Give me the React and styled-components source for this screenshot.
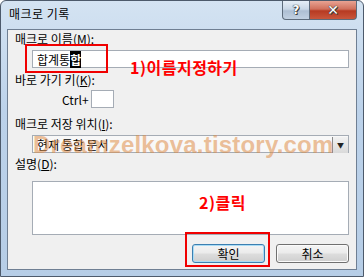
import React from 'react';
import styled, { createGlobalStyle } from 'styled-components';

const GlobalStyle = createGlobalStyle`
  html, body {
    margin: 0;
    padding: 0;
    background: #ffffff;
  }
  body {
    font-family: "Noto Sans CJK KR", "DejaVu Sans", sans-serif;
    font-size: 12px;
  }
`;

const Window = styled.div`
  position: relative;
  width: 364px;
  height: 277px;
  box-sizing: border-box;
  border: 1px solid #4d5a6b;
  border-radius: 6px 6px 0 0;
  background: linear-gradient(180deg, #d4e3f2 0%, #bcd2ea 40%, #b6cde6 100%);
  display: flex;
  flex-direction: column;
  overflow: hidden;
`;

const TitleBar = styled.div`
  height: 28px;
  display: flex;
  align-items: flex-start;
  justify-content: space-between;
  padding-left: 8px;
`;

const Title = styled.span`
  margin-top: 5px;
  font-size: 12px;
  line-height: 16px;
  color: #000;
  letter-spacing: 0.5px;
`;

const Caption = styled.div`
  display: flex;
  margin-right: 6px;
`;

const CapButton = styled.div`
  width: ${p => p.$w}px;
  height: 19px;
  box-sizing: border-box;
  border: 1px solid #5d6b7b;
  border-top: none;
  border-radius: ${p => (p.$close ? '0 0 4px 0' : '0 0 0 4px')};
  background: ${p =>
    p.$close
      ? 'linear-gradient(180deg, #e8a393 0%, #d0705c 45%, #b73a22 55%, #c9563c 100%)'
      : 'linear-gradient(180deg, #e6eef7 0%, #c9d7e6 45%, #aebfd3 55%, #c2d1e2 100%)'};
  display: flex;
  align-items: center;
  justify-content: center;
  font-family: "DejaVu Sans", sans-serif;
  font-weight: bold;
  font-size: ${p => (p.$close ? 14 : 12)}px;
  color: #fff;
  text-shadow: 0 0 1px #2b2b2b, 0 0 1px #2b2b2b, 1px 1px 0 #444;
  margin-left: ${p => (p.$close ? -1 : 0)}px;
`;

const Client = styled.div`
  position: relative;
  flex: 1;
  margin: 0 6px 6px 6px;
  border: 1px solid #6f7f93;
  background: #f0f0f0;
  padding: 2px 0 0 7px;
  display: flex;
  flex-direction: column;
  color: #000;
`;

const Label = styled.div`
  font-size: 12px;
  line-height: 14px;
  height: 14px;
  margin-top: ${p => p.$top || 0}px;

  u {
    text-decoration: underline;
  }
`;

const Field = styled.div`
  position: relative;
  margin-left: 17px;
  width: ${p => p.$w || 317}px;
  height: ${p => p.$h || 18}px;
  margin-top: ${p => p.$top || 0}px;
  box-sizing: border-box;
  border: 1px solid #a5acb5;
  background: #fff;
  display: flex;
  align-items: center;
  padding-left: 4px;
  font-size: 12px;
`;

const Composing = styled.span`
  background: #000;
  color: #fff;
  font-weight: bold;
`;

const ShortcutRow = styled.div`
  display: flex;
  align-items: center;
  margin-top: 3px;
  padding-left: 47px;
  gap: 2px;
`;

const KeyBox = styled.div`
  width: 23px;
  height: 18px;
  box-sizing: border-box;
  border: 1px solid #a5acb5;
  background: #fff;
`;

const Select = styled(Field)`
  background: #f8f8f8;
  color: #000;
`;

const DropButton = styled.div`
  position: absolute;
  right: 0;
  top: 1px;
  width: 16px;
  height: 16px;
  box-sizing: border-box;
  border-left: 1px solid #8a8a8a;
  background: linear-gradient(180deg, #f2f2f2, #dadada);
  display: flex;
  align-items: flex-end;
  justify-content: center;
  padding-bottom: 4px;
  font-size: 7px;
  color: #222;
  line-height: 7px;
`;

const Watermark = styled.div`
  position: absolute;
  left: 25px;
  top: 100px;
  font-family: "Liberation Sans", "DejaVu Sans", sans-serif;
  font-weight: bold;
  font-size: 24px;
  line-height: 30px;
  letter-spacing: 0.2px;
  color: rgba(222, 140, 70, 0.55);
  white-space: nowrap;
  pointer-events: none;
`;

const ButtonRow = styled.div`
  display: flex;
  justify-content: flex-end;
  gap: 11px;
  margin-top: 9px;
  padding-right: 7px;
`;

const Button = styled.div`
  position: relative;
  width: 73px;
  height: 19px;
  box-sizing: border-box;
  border: 1px solid ${p => (p.$focus ? '#3c7fb1' : '#707070')};
  border-radius: 3px;
  background: linear-gradient(180deg, #f4f4f4 0%, #ebebeb 48%, #dddddd 52%, #cfcfcf 100%);
  box-shadow: ${p => (p.$focus ? 'inset 0 0 0 1px #a9dcf5' : 'inset 0 0 0 1px #fbfbfb')};
  display: flex;
  align-items: center;
  justify-content: center;
  font-size: 12px;
`;

const RedFrame = styled.div`
  position: absolute;
  left: ${p => p.$x}px;
  top: ${p => p.$y}px;
  width: ${p => p.$w}px;
  height: ${p => p.$h}px;
  box-sizing: border-box;
  border: 2px solid #f00000;
  pointer-events: none;
`;

const Note = styled.div`
  position: absolute;
  left: ${p => p.$x}px;
  top: ${p => p.$y}px;
  font-family: "Noto Sans CJK KR", sans-serif;
  font-weight: bold;
  font-size: 16px;
  line-height: 20px;
  color: #ff0000;
  letter-spacing: 0.5px;
  white-space: nowrap;
`;

export default function App() {
  return (
    <>
      <GlobalStyle />
      <Window>
        <TitleBar>
          <Title>매크로 기록</Title>
          <Caption>
            <CapButton $w={28}>?</CapButton>
            <CapButton $w={48} $close>✕</CapButton>
          </Caption>
        </TitleBar>
        <Client>
          <Label>매크로 이름(<u>M</u>):</Label>
          <Field $top={4}>
            합계통<Composing>합</Composing>
          </Field>
          <Label $top={5}>바로 가기 키(<u>K</u>):</Label>
          <ShortcutRow>
            <span>Ctrl+</span>
            <KeyBox />
          </ShortcutRow>
          <Label $top={9}>매크로 저장 위치(<u>I</u>):</Label>
          <Select $top={4}>
            현재 통합 문서
            <DropButton>▼</DropButton>
          </Select>
          <Label $top={4}>설명(<u>D</u>):</Label>
          <Field $top={10} $h={54} />
          <ButtonRow>
            <Button $focus>확인</Button>
            <Button>취소</Button>
          </ButtonRow>
          <Watermark>Dreamzelkova.tistory.com</Watermark>
          <RedFrame $x={17} $y={14} $w={83} $h={29} />
          <Note $x={122} $y={27}>1)이름지정하기</Note>
          <Note $x={191} $y={162}>2)클릭</Note>
          <RedFrame $x={177} $y={202} $w={85} $h={35} />
        </Client>
      </Window>
    </>
  );
}
